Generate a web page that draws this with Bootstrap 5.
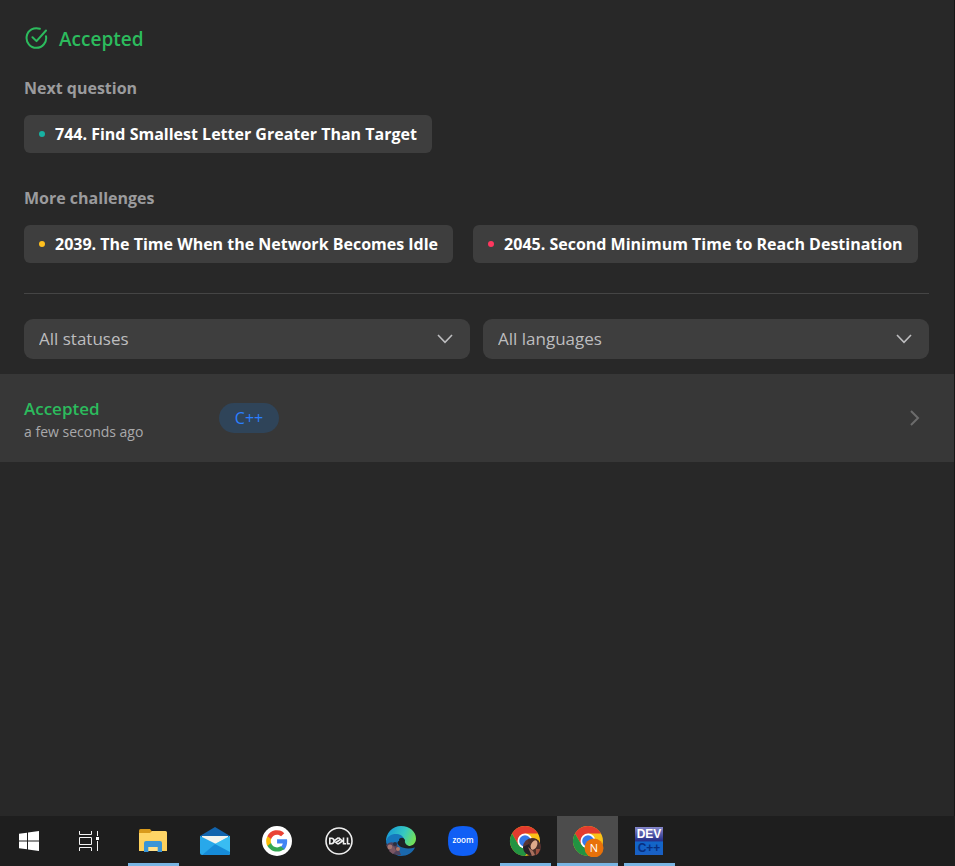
<!DOCTYPE html>
<html lang="en">
<head>
<meta charset="utf-8">
<meta name="viewport" content="width=device-width, initial-scale=1">
<title>Submissions</title>
<link href="https://cdn.jsdelivr.net/npm/bootstrap@5.3.0/dist/css/bootstrap.min.css" rel="stylesheet">
<style>
  body { background: #282828; color: #fff; font-family: "Segoe UI", "Open Sans", "Noto Sans", sans-serif; font-size: 17px; line-height: 24px; }
  .panel { padding: 24px 25px 15px 24px; }
  .edge { border-right: 1px solid #161616; }
  .ok { color: #2cbb5d; }
  .result { font-size: 19px; line-height: 30px; font-weight: 600; gap: 11px; margin-bottom: 22px; }
  .section-title { font-size: 16px; line-height: 24px; font-weight: 700; color: #9b9b9d; margin-bottom: 15px; }
  .questions { gap: 12px 20px; }
  .question { background: #3e3e3e; color: #fff; font-size: 16px; height: 38px; padding: 0 15px; border-radius: 6px; gap: 10px; font-weight: 700; text-decoration: none; white-space: nowrap; }
  .question:hover { background: #484848; }
  .dot { width: 6px; height: 6px; border-radius: 50%; flex: none; }
  .easy { background: #17b2a2; }
  .medium { background: #ffc01e; }
  .hard { background: #ff375f; }
  .first-group { margin-bottom: 33px; }
  .rule { border-top: 1px solid #454545; margin: 30px 0 25px; }
  .filters { gap: 13px; }
  .filters .form-select { height: 40px; padding: 0 44px 0 15px; font-size: 17px; line-height: 24px; color: #bdbdbf; background-color: #3e3e3e; border: 0; border-radius: 9px;
    background-image: url("data:image/svg+xml,%3Csvg xmlns='http://www.w3.org/2000/svg' viewBox='0 0 18 18' fill='none' stroke='%23bdbdbf' stroke-width='1.600'%3E%3Cpath d='M2 5l7 7.300l7-7.300'/%3E%3C/svg%3E"); background-size: 18px 18px; background-position: right 16px center; }
  .submission { background: #373737; color: #fff; min-height: 88px; padding: 0 33px 0 24px; text-decoration: none; }
  .status { width: 195px; padding-top: 4px; }
  .status b { font-weight: 600; }
  .ago { font-size: 14px; line-height: 22px; color: #a9a9ab; }
  .lang { background: #2f4459; color: #2b7fff; font-size: 16px; line-height: 30px; width: 60px; border-radius: 15px; font-weight: 500; text-align: center; }
  .taskbar { background: #1e1e1e; height: 50px; }
  .task { width: 62px; height: 50px; border: 0; padding: 0; background: none; }
  .task svg { display: block; }
  .start { width: 58px; }
  .view { margin-right: 2px; }
  .open::after { content: ""; position: absolute; bottom: 0; left: 6px; right: 5px; height: 3px; background: #78b5e3; }
  .current { background: #4c4c4c; background-clip: content-box; padding-left: 1px; }
  .current::after { left: 1px; right: 0; }
</style>
<script src="https://cdn.jsdelivr.net/npm/bootstrap@5.3.0/dist/js/bootstrap.bundle.min.js"></script>
</head>
<body>
<div class="d-flex flex-column min-vh-100">
  <main class="flex-grow-1 edge">
    <div class="panel">
      <h1 class="result ok d-flex align-items-center">
        <svg width="24" height="24" viewBox="0 0 24 24" fill="none" stroke="currentColor" stroke-width="2" stroke-linecap="round" stroke-linejoin="round" aria-hidden="true"><path d="M15.800 1.800A9.800 9.800 0 1 0 22 9.200M8.500 10.300l4 3.800L22 3.500"/></svg>
        <span>Accepted</span>
      </h1>
      <h2 class="section-title">Next question</h2>
      <div class="questions first-group d-flex flex-wrap">
        <a class="question d-inline-flex align-items-center" href="#"><span class="dot easy"></span>744. Find Smallest Letter Greater Than Target</a>
      </div>
      <h2 class="section-title">More challenges</h2>
      <div class="questions d-flex flex-wrap">
        <a class="question d-inline-flex align-items-center" href="#"><span class="dot medium"></span>2039. The Time When the Network Becomes Idle</a>
        <a class="question d-inline-flex align-items-center" href="#"><span class="dot hard"></span>2045. Second Minimum Time to Reach Destination</a>
      </div>
      <div class="rule"></div>
      <div class="filters d-flex">
        <select class="form-select" aria-label="Status"><option>All statuses</option></select>
        <select class="form-select" aria-label="Language"><option>All languages</option></select>
      </div>
    </div>
    <a class="submission d-flex align-items-center" href="#">
      <span class="status d-flex flex-column"><b class="ok">Accepted</b><span class="ago">a few seconds ago</span></span>
      <span class="lang">C++</span>
      <svg class="ms-auto" width="12" height="18" viewBox="0 0 12 18" fill="none" stroke="#6c6c6c" stroke-width="2" aria-hidden="true"><path d="M2 2l7 7-7 7"/></svg>
    </a>
  </main>

  <nav class="taskbar d-flex" aria-label="Taskbar">
    <button type="button" class="task start d-flex align-items-center justify-content-center" aria-label="Start">
      <svg width="20" height="20" viewBox="0 0 20 20" fill="#fff"><path d="M0 2.800 8 1.700V9.500H0zM9 1.500 20 0v9.500H9zM0 10.500h8v7.800L0 17.200zM9 10.500h11V20L9 18.500z"/></svg>
    </button>
    <button type="button" class="task view d-flex align-items-center justify-content-center" aria-label="Task view">
      <svg width="22" height="20" viewBox="0 0 22 20" fill="none" stroke="#f4f4f4" stroke-width="1"><path d="M1.500 0v3.500h12V0M1.500 6.500h12v7h-12zM1.500 20v-3.500h12V20M19.500 0v5M19.500 10v10"/><path d="M18 6h3v3h-3z" fill="#fff" stroke="none"/></svg>
    </button>
    <button type="button" class="task open position-relative d-flex align-items-center justify-content-center" aria-label="File Explorer">
      <svg width="28" height="24" viewBox="0 0 28 24"><path d="M0 1.500Q0 0 1.500 0H11l2 2.500V6H0z" fill="#d99a1c"/><path d="M0 4h11l2-2h13.500Q28 2 28 3.500V22H0z" fill="#ffd566"/><path d="M0 11h28v11H0z" fill="#fbc94c" opacity=".4"/><path d="M5 23v-9q0-2 2-2h14q2 0 2 2v9h-4.500v-5h-9v5z" fill="#3995d7"/><path d="M9.500 18h9v4h-9z" fill="#ffe08a"/></svg>
    </button>
    <button type="button" class="task d-flex align-items-center justify-content-center" aria-label="Mail">
      <svg width="30" height="28" viewBox="0 0 30 28"><path d="M0 9 15 0l15 9v5H0z" fill="#1264ad"/><path d="M2 9h26v8L15 22 2 17z" fill="#f3f3ed"/><path d="M0 9 30 24v2q0 2-2 2H2q-2 0-2-2z" fill="#28a8ea"/><path d="M30 9 15 17l15 10z" fill="#63d3f7"/><path d="M30 9v17q0 2-2 2H2L15 17z" fill="#39bcf2"/><path d="M15 17l15 8v1q0 2-2 2H2z" fill="#168bd8"/></svg>
    </button>
    <button type="button" class="task d-flex align-items-center justify-content-center" aria-label="Google">
      <svg width="30" height="30" viewBox="0 0 30 30"><circle cx="15" cy="15" r="15" fill="#fff"/><g transform="translate(4.500 4.500) scale(.88)"><path d="M23.500 12.300c0-.9-.1-1.500-.2-2.300H12v4.800h6.500c-.3 1.500-1.200 3-2.500 3.900v3.200h4.100c2.200-2.200 3.400-5.500 3.400-9.600z" fill="#4285f4"/><path d="M12 24c3.200 0 6-1 8.100-2.900L16 18c-1.100.7-2.400 1.200-4 1.200-3.200 0-5.900-2.100-6.800-5H1v3.200C3 21.300 7.300 24 12 24z" fill="#34a853"/><path d="M5.200 14.300a7.200 7.200 0 0 1 0-4.600V6.500H1a12 12 0 0 0 0 11z" fill="#fbbc05"/><path d="M12 4.700c1.800 0 3.400.6 4.600 1.800L20.200 3A12 12 0 0 0 1 6.500l4.200 3.200c.9-2.900 3.600-5 6.800-5z" fill="#ea4335"/></g></svg>
    </button>
    <button type="button" class="task d-flex align-items-center justify-content-center" aria-label="Dell">
      <svg width="28" height="28" viewBox="0 0 28 28"><circle cx="14" cy="14" r="13" fill="none" stroke="#eee" stroke-width="1.600"/><g fill="none" stroke="#eee" stroke-width="1.600"><path d="M4.800 11.300v5.400h1.500q2.700-.2 2.700-2.700t-2.700-2.700zM9 14l4.500-3.300M11 15.500l4.500-3.200M13 17.200l4.500-3.200M9 14l4 3.200M13.500 10.700l4 3.300M18.500 10.500v6.200H21M22.500 10.500v6.200h2.300"/></g></svg>
    </button>
    <button type="button" class="task d-flex align-items-center justify-content-center" aria-label="Microsoft Edge">
      <svg width="30" height="30" viewBox="0 0 30 30">
        <defs><linearGradient id="sea" x1="0" x2="1" y1=".2" y2=".5"><stop stop-color="#1596d8"/><stop offset=".6" stop-color="#36c9c1"/><stop offset="1" stop-color="#72e05a"/></linearGradient></defs>
        <path d="M0 16A15 15 0 0 1 15 0c9 0 15 6 15 12.500 0 5-3.500 7.500-7.500 7.500-4 0-5.500-1.500-5-3.500 1-2.500-1-6.500-6.500-6.500C5 10 1 13 0 16z" fill="url(#sea)"/>
        <path d="M0 16C1 10 6 7.500 11 8c5 .5 8 4 7 8-3-4-8-1-7 4 1 4 8 7 15 3A15 15 0 0 1 0 16z" fill="#1677bd"/>
        <path d="M11 15c0 6 8 9 18 6.500-2 5-8 8.500-14 8.500-8 0-10-8-4-15z" fill="#1a68ac"/>
        <path d="M13 13q4-3 6 1-1 4 4 6-6 2-9-1z" fill="#1e2326"/>
        <path d="M0 19q4-4 8-2l3 2 4 10Q4 30 0 19z" fill="#51425b"/><circle cx="4" cy="21" r="2.500" fill="#a47672"/><circle cx="9" cy="18" r="2" fill="#2c2d3d"/><path d="M3 25l5-5 2 5-3 3z" fill="#7c5763"/><circle cx="12" cy="23" r="2" fill="#b27865"/>
      </svg>
    </button>
    <button type="button" class="task d-flex align-items-center justify-content-center" aria-label="Zoom">
      <svg width="30" height="30" viewBox="0 0 30 30"><path d="M15 0C26 0 30 4 30 15S26 30 15 30 0 26 0 15 4 0 15 0z" fill="#105ff5"/><text x="15" y="17" text-anchor="middle" fill="#fff" font-family="Open Sans, sans-serif" font-size="8" font-weight="600">zoom</text></svg>
    </button>
    <button type="button" class="task open position-relative d-flex align-items-center justify-content-center" aria-label="Chrome, first profile">
      <svg width="32" height="32" viewBox="0 0 32 32"><g id="chrome"><circle cx="16" cy="16" r="15" fill="#fbc116"/><path d="M3 8.500A15 15 0 0 1 29 8.500H16L9.500 20z" fill="#e33b2e"/><path d="M3 8.500 9.500 20 16 23.500h6.500L16 31A15 15 0 0 1 3 8.500z" fill="#229342"/><circle cx="16" cy="16" r="7.500" fill="#fff"/><circle cx="16" cy="16" r="5.800" fill="#3579e8"/></g>
        <circle cx="23" cy="22" r="9" fill="#5a3432"/><path d="M19 15q7-4 11 1l1 9-6 5-4-7z" fill="#4b3029"/><ellipse cx="25" cy="20" rx="3" ry="5" transform="rotate(25 25 20)" fill="#dfab8b"/><path d="M14 22l6-3 4 11q-9 1-10-8z" fill="#262028"/><path d="M19 22l5 4 2 4-3 1z" fill="#a86f5d"/><path d="M27 24l4 0q-1 5-4 6z" fill="#9e503f"/></svg>
    </button>
    <button type="button" class="task current open position-relative d-flex align-items-center justify-content-center" aria-label="Chrome, profile N">
      <svg width="32" height="32" viewBox="0 0 32 32"><use href="#chrome"/><circle cx="22" cy="23" r="9.500" fill="#e8710a"/><text x="22" y="27" text-anchor="middle" fill="#fff" font-family="Open Sans, sans-serif" font-size="11">N</text></svg>
    </button>
    <button type="button" class="task open position-relative d-flex align-items-center justify-content-center" aria-label="Dev-C++">
      <svg width="28" height="28" viewBox="0 0 28 28"><defs><linearGradient id="dev" x2="0" y2="1"><stop stop-color="#8587ca"/><stop offset=".48" stop-color="#27318b"/><stop offset=".55" stop-color="#1166c9"/><stop offset="1" stop-color="#1a5fc4"/></linearGradient></defs><rect width="28" height="28" fill="url(#dev)"/><text x="14" y="11" text-anchor="middle" fill="#fff" font-family="Liberation Sans, sans-serif" font-size="12" font-weight="700">DEV</text><text x="14" y="25" text-anchor="middle" fill="#082f80" font-family="Liberation Sans, sans-serif" font-size="12" font-weight="700">C++</text></svg>
    </button>
  </nav>
</div>
</body>
</html>
